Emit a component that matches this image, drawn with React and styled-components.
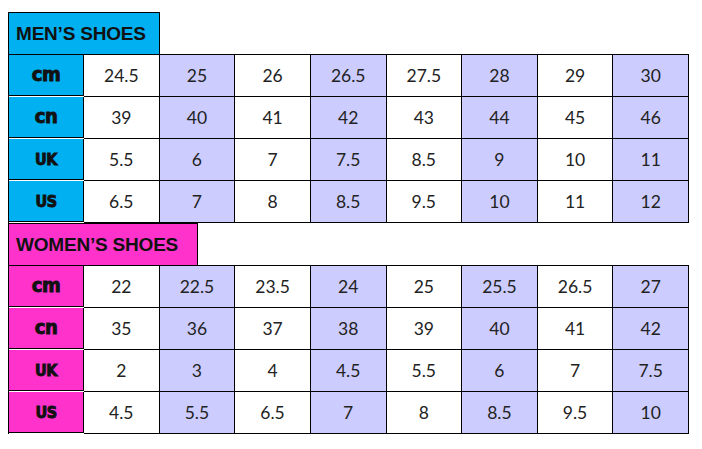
import styled, { createGlobalStyle } from "styled-components";

const GlobalStyle = createGlobalStyle`
  body {
    margin: 0;
    background: #ffffff;
  }
`;

const Page = styled.div`
  padding: 12px 0 0 8px;
  display: flex;
  flex-direction: column;
  width: 681px;
`;

const Section = styled.section`
  display: flex;
  flex-direction: column;
`;

const Title = styled.div`
  width: ${(p) => p.$width}px;
  height: 42px;
  box-sizing: border-box;
  border: 1px solid #000;
  border-bottom: none;
  background: ${(p) => p.$color};
  display: flex;
  align-items: center;
  padding-left: 7px;
  font-family: "Liberation Sans", Arial, sans-serif;
  font-weight: bold;
  font-size: 19px;
  letter-spacing: -0.2px;
  color: #111;
`;

const Grid = styled.div`
  display: grid;
  grid-template-columns: 75px repeat(8, 1fr);
  border-top: 1px solid #000;
  border-left: 1px solid #000;
`;

const Label = styled.div`
  height: 41px;
  border-right: 1px solid #000;
  border-bottom: 1px solid #000;
  background: ${(p) => p.$color};
  display: flex;
  align-items: center;
  justify-content: center;
  font-family: "DejaVu Sans Condensed", "DejaVu Sans", sans-serif;
  font-weight: bold;
  font-size: ${(p) => (p.$lower ? 20 : 16)}px;
  letter-spacing: -0.5px;
  -webkit-text-stroke: 0.9px #111;
  color: #111;
  padding-bottom: ${(p) => (p.$lower ? 3 : 0)}px;
  box-sizing: border-box;
`;

const Cell = styled.div`
  height: 41px;
  border-right: 1px solid #000;
  border-bottom: 1px solid #000;
  background: ${(p) => (p.$shaded ? "#ccccff" : "#ffffff")};
  display: flex;
  align-items: center;
  justify-content: center;
  font-family: Lato, "Open Sans", sans-serif;
  font-size: 17.5px;
  color: #222;
`;

const men = [
  ["cm", ["24.5", "25", "26", "26.5", "27.5", "28", "29", "30"]],
  ["cn", ["39", "40", "41", "42", "43", "44", "45", "46"]],
  ["UK", ["5.5", "6", "7", "7.5", "8.5", "9", "10", "11"]],
  ["US", ["6.5", "7", "8", "8.5", "9.5", "10", "11", "12"]],
];

const women = [
  ["cm", ["22", "22.5", "23.5", "24", "25", "25.5", "26.5", "27"]],
  ["cn", ["35", "36", "37", "38", "39", "40", "41", "42"]],
  ["UK", ["2", "3", "4", "4.5", "5.5", "6", "7", "7.5"]],
  ["US", ["4.5", "5.5", "6.5", "7", "8", "8.5", "9.5", "10"]],
];

function SizeTable({ title, width, color, rows }) {
  return (
    <Section>
      <Title $width={width} $color={color}>{title}</Title>
      <Grid>
        {rows.map(([label, values]) => [
          <Label key={label} $color={color} $lower={label === label.toLowerCase()}>
            {label}
          </Label>,
          ...values.map((v, i) => (
            <Cell key={label + i} $shaded={i % 2 === 1}>{v}</Cell>
          )),
        ])}
      </Grid>
    </Section>
  );
}

function App() {
  return (
    <>
      <GlobalStyle />
      <Page>
        <SizeTable title="MEN’S SHOES" width={152} color="#00b0f0" rows={men} />
        <SizeTable title="WOMEN’S SHOES" width={190} color="#ff33cc" rows={women} />
      </Page>
    </>
  );
}

export default App;
